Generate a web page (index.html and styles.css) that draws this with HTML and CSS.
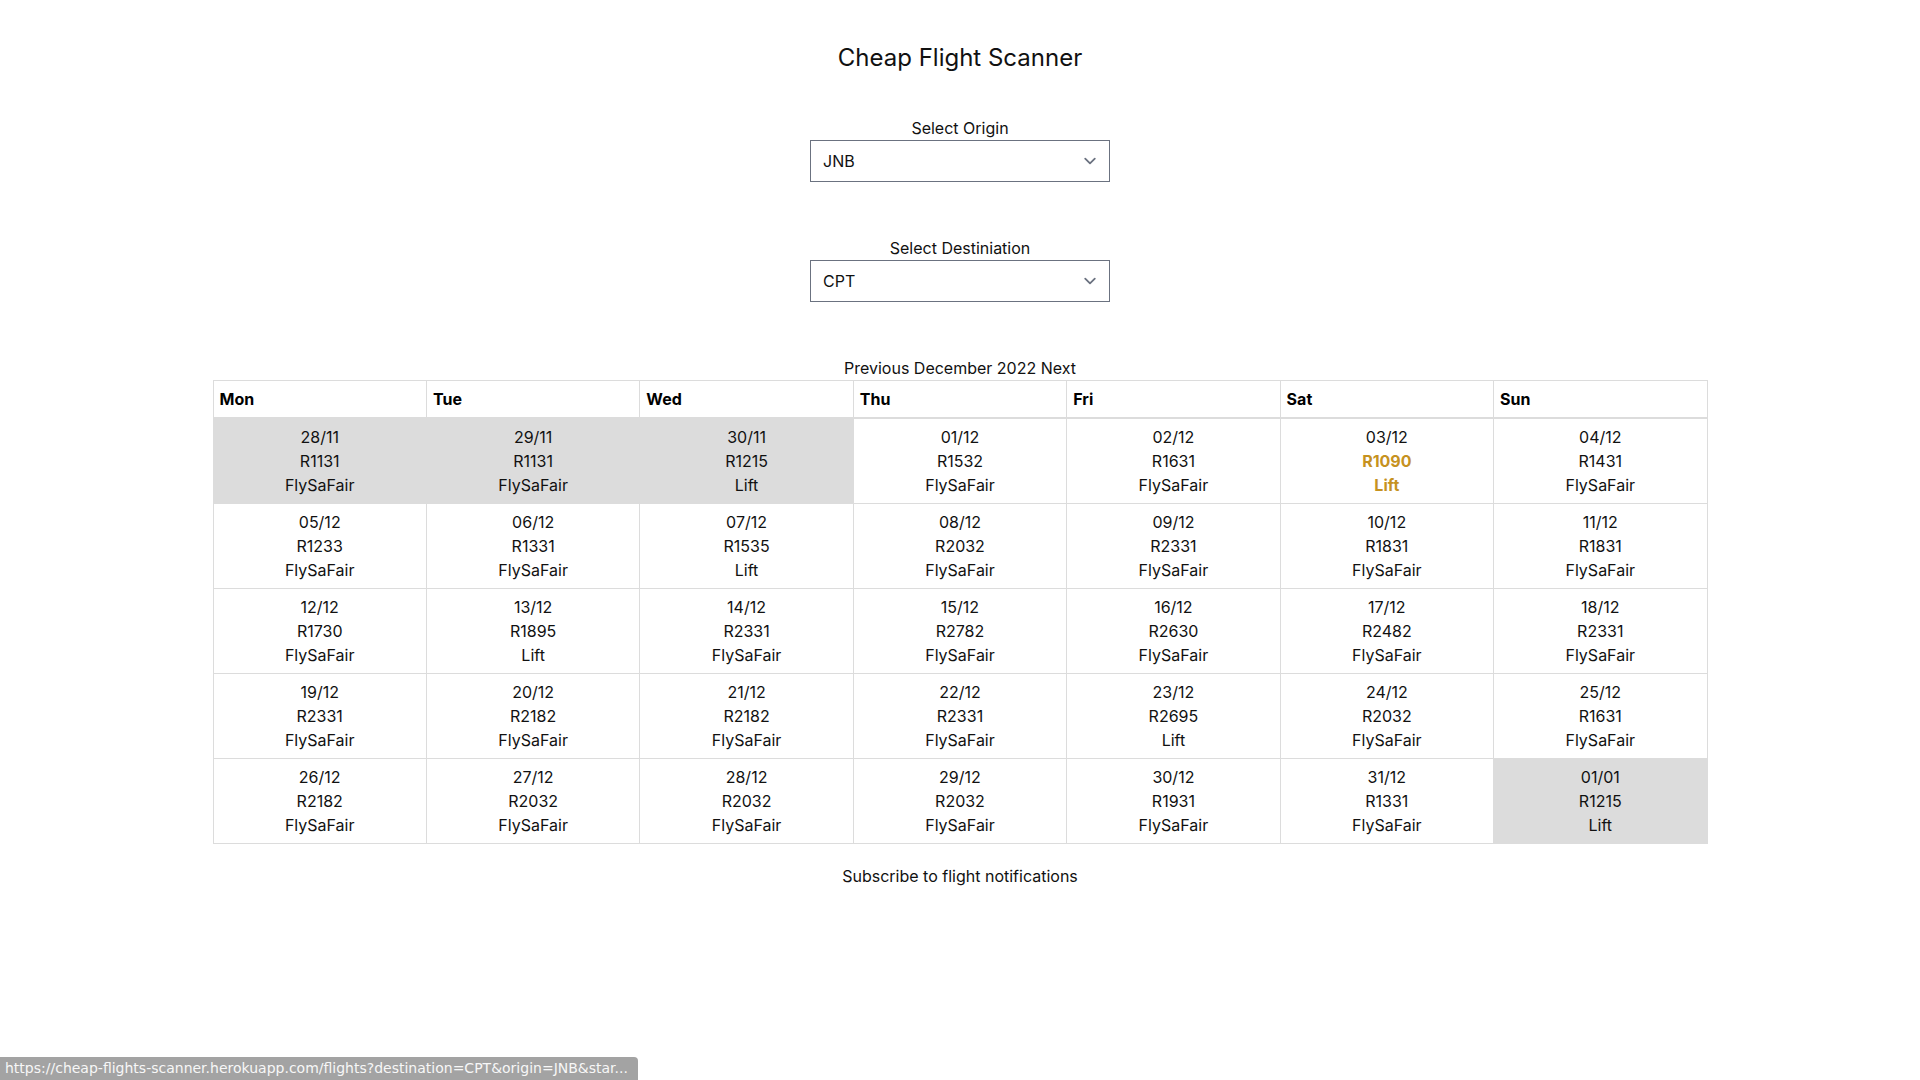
FILE: index.html
```html
<!DOCTYPE html>
<html lang="en">
<head>
<meta charset="utf-8">
<title>Cheap Flight Scanner</title>
<link rel="stylesheet" href="styles.css">
</head>
<body>
<main class="page">
  <h1 class="title">Cheap Flight Scanner</h1>

  <div class="field field-first">
    <label class="field-label" for="origin">Select Origin</label>
    <div class="select-wrap">
      <select id="origin" class="select"><option>JNB</option><option>CPT</option><option>DUR</option></select>
      <svg class="chevron" viewBox="0 0 20 20" width="24" height="24" aria-hidden="true"><path d="M6 8l4 4 4-4" fill="none" stroke="#6b7280" stroke-width="1.5" stroke-linecap="round" stroke-linejoin="round"/></svg>
    </div>
  </div>

  <div class="field">
    <label class="field-label" for="destination">Select Destiniation</label>
    <div class="select-wrap">
      <select id="destination" class="select"><option>CPT</option><option>JNB</option><option>DUR</option></select>
      <svg class="chevron" viewBox="0 0 20 20" width="24" height="24" aria-hidden="true"><path d="M6 8l4 4 4-4" fill="none" stroke="#6b7280" stroke-width="1.5" stroke-linecap="round" stroke-linejoin="round"/></svg>
    </div>
  </div>

  <div class="month-nav"><a href="#" class="nav-link">Previous</a> December 2022 <a href="#" class="nav-link">Next</a></div>

  <table class="calendar">
    <thead>
      <tr><th>Mon</th><th>Tue</th><th>Wed</th><th>Thu</th><th>Fri</th><th>Sat</th><th>Sun</th></tr>
    </thead>
    <tbody>
      <tr>
        <td class="other"><div>28/11</div><div>R1131</div><div>FlySaFair</div></td>
        <td class="other"><div>29/11</div><div>R1131</div><div>FlySaFair</div></td>
        <td class="other"><div>30/11</div><div>R1215</div><div>Lift</div></td>
        <td><div>01/12</div><div>R1532</div><div>FlySaFair</div></td>
        <td><div>02/12</div><div>R1631</div><div>FlySaFair</div></td>
        <td><div>03/12</div><div class="best">R1090</div><div class="best">Lift</div></td>
        <td><div>04/12</div><div>R1431</div><div>FlySaFair</div></td>
      </tr>
      <tr>
        <td><div>05/12</div><div>R1233</div><div>FlySaFair</div></td>
        <td><div>06/12</div><div>R1331</div><div>FlySaFair</div></td>
        <td><div>07/12</div><div>R1535</div><div>Lift</div></td>
        <td><div>08/12</div><div>R2032</div><div>FlySaFair</div></td>
        <td><div>09/12</div><div>R2331</div><div>FlySaFair</div></td>
        <td><div>10/12</div><div>R1831</div><div>FlySaFair</div></td>
        <td><div>11/12</div><div>R1831</div><div>FlySaFair</div></td>
      </tr>
      <tr>
        <td><div>12/12</div><div>R1730</div><div>FlySaFair</div></td>
        <td><div>13/12</div><div>R1895</div><div>Lift</div></td>
        <td><div>14/12</div><div>R2331</div><div>FlySaFair</div></td>
        <td><div>15/12</div><div>R2782</div><div>FlySaFair</div></td>
        <td><div>16/12</div><div>R2630</div><div>FlySaFair</div></td>
        <td><div>17/12</div><div>R2482</div><div>FlySaFair</div></td>
        <td><div>18/12</div><div>R2331</div><div>FlySaFair</div></td>
      </tr>
      <tr>
        <td><div>19/12</div><div>R2331</div><div>FlySaFair</div></td>
        <td><div>20/12</div><div>R2182</div><div>FlySaFair</div></td>
        <td><div>21/12</div><div>R2182</div><div>FlySaFair</div></td>
        <td><div>22/12</div><div>R2331</div><div>FlySaFair</div></td>
        <td><div>23/12</div><div>R2695</div><div>Lift</div></td>
        <td><div>24/12</div><div>R2032</div><div>FlySaFair</div></td>
        <td><div>25/12</div><div>R1631</div><div>FlySaFair</div></td>
      </tr>
      <tr>
        <td><div>26/12</div><div>R2182</div><div>FlySaFair</div></td>
        <td><div>27/12</div><div>R2032</div><div>FlySaFair</div></td>
        <td><div>28/12</div><div>R2032</div><div>FlySaFair</div></td>
        <td><div>29/12</div><div>R2032</div><div>FlySaFair</div></td>
        <td><div>30/12</div><div>R1931</div><div>FlySaFair</div></td>
        <td><div>31/12</div><div>R1331</div><div>FlySaFair</div></td>
        <td class="other"><div>01/01</div><div>R1215</div><div>Lift</div></td>
      </tr>
    </tbody>
  </table>

  <a href="#" class="subscribe">Subscribe to flight notifications</a>
</main>

<div class="status-bubble">https://cheap-flights-scanner.herokuapp.com/flights?destination=CPT&amp;origin=JNB&amp;star...</div>
</body>
</html>
```

FILE: styles.css
```css
html, body {
  margin: 0;
  padding: 0;
  background: #ffffff;
}

body {
  font-family: Inter, "Noto Sans", "Liberation Sans", sans-serif;
  font-size: 16px;
  line-height: 24px;
  color: #111111;
}

.page {
  display: flex;
  flex-direction: column;
  align-items: center;
}

.title {
  margin: 42px 0 0;
  font-size: 24px;
  line-height: 32px;
  font-weight: 400;
  color: #111111;
}

.field {
  display: flex;
  flex-direction: column;
  align-items: center;
  margin-top: 54px;
}

.field-first {
  margin-top: 42px;
}

.field-label {
  display: block;
  line-height: 24px;
}

.select-wrap {
  position: relative;
  width: 300px;
  height: 42px;
}

.select {
  appearance: none;
  -webkit-appearance: none;
  box-sizing: border-box;
  width: 300px;
  height: 42px;
  margin: 0;
  padding: 0 40px 0 12px;
  border: 1px solid #6b7280;
  border-radius: 0;
  background: #ffffff;
  font-family: inherit;
  font-size: 16px;
  line-height: 24px;
  color: #111111;
}

.chevron {
  position: absolute;
  right: 8px;
  top: 9px;
  pointer-events: none;
}

.month-nav {
  margin-top: 54px;
  line-height: 24px;
}

.nav-link {
  color: inherit;
  text-decoration: none;
}

.calendar {
  width: 1495px;
  table-layout: fixed;
  border-collapse: collapse;
  border: 1px solid #dcdcdc;
}

.calendar th {
  padding: 6px;
  text-align: left;
  font-weight: 700;
  color: #000000;
  border: 1px solid #dcdcdc;
  border-bottom: 2px solid #dcdcdc;
  line-height: 24px;
}

.calendar td {
  padding: 6px;
  text-align: center;
  border: 1px solid #dcdcdc;
  line-height: 24px;
  vertical-align: top;
}

.calendar td.other {
  background: #dcdcdc;
}

.best {
  color: #c6921f;
  font-weight: 700;
}

.subscribe {
  margin-top: 20px;
  line-height: 24px;
  color: inherit;
  text-decoration: none;
}

.status-bubble {
  position: fixed;
  left: 0;
  bottom: 0;
  width: 638px;
  height: 23px;
  box-sizing: border-box;
  padding: 0 0 0 5px;
  background: #a3a3a3;
  border-top-right-radius: 4px;
  color: #f7f7f7;
  font-family: "DejaVu Sans", sans-serif;
  font-size: 14px;
  line-height: 23px;
  white-space: nowrap;
  overflow: hidden;
}
```
